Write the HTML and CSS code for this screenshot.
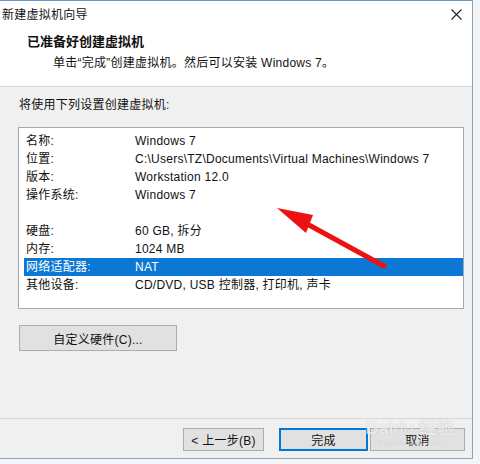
FILE: index.html
```html
<!DOCTYPE html>
<html lang="zh-CN">
<head>
    <meta charset="UTF-8">
    <title>新建虚拟机向导</title>
    <link rel="stylesheet" href="styles.css">
</head>
<body>
    <div class="window">
        <div class="titlebar">
            <span class="title">新建虚拟机向导</span>
            <svg class="close" width="11" height="11" viewBox="0 0 11 11">
                <path d="M0.5 0.5 L10.5 10.5 M10.5 0.5 L0.5 10.5" stroke="#222" stroke-width="1.1" fill="none"/>
            </svg>
        </div>

        <div class="header">
            <h1>已准备好创建虚拟机</h1>
            <p>单击“完成”创建虚拟机。然后可以安装 Windows 7。</p>
        </div>

        <div class="content">
            <p class="intro">将使用下列设置创建虚拟机:</p>
            <div class="listbox">
                <div class="row"><span class="key">名称:</span><span>Windows 7</span></div>
                <div class="row"><span class="key">位置:</span><span>C:\Users\TZ\Documents\Virtual Machines\Windows 7</span></div>
                <div class="row"><span class="key">版本:</span><span>Workstation 12.0</span></div>
                <div class="row"><span class="key">操作系统:</span><span>Windows 7</span></div>
                <div class="row"></div>
                <div class="row"><span class="key">硬盘:</span><span>60 GB, 拆分</span></div>
                <div class="row"><span class="key">内存:</span><span>1024 MB</span></div>
                <div class="row selected"><span class="key">网络适配器:</span><span>NAT</span></div>
                <div class="row"><span class="key">其他设备:</span><span>CD/DVD, USB 控制器, 打印机, 声卡</span></div>
            </div>
            <button class="btn btn-custom">自定义硬件(C)...</button>
        </div>

        <div class="footer">
            <button class="btn btn-back">&lt; 上一步(B)</button>
            <button class="btn btn-finish">完成</button>
            <button class="btn btn-cancel">取消</button>
        </div>
    </div>

    <!-- annotation arrow -->
    <svg class="arrow" width="480" height="464" viewBox="0 0 480 464">
        <line x1="384" y1="266" x2="298" y2="219" stroke="#ec1212" stroke-width="5" stroke-linecap="round"/>
        <polygon points="277,208 313,215 306,233" fill="#ec1212"/>
    </svg>

    <div class="watermark">
        <span class="wm-big">Bai<span class="wm-du">du</span> 经验</span>
        <span class="wm-small">jingyan.baidu.com</span>
    </div>
</body>
</html>
```

FILE: styles.css
```css
body {
    margin: 0;
    width: 480px;
    height: 464px;
    background: #f3f4f6;
    font-family: "Liberation Sans", "Noto Sans CJK SC", sans-serif;
    font-size: 12px;
    letter-spacing: 0.25px;
    color: #111;
    position: relative;
    overflow: hidden;
}

.window {
    width: 473px;
    height: 459px;
    box-sizing: border-box;
    background: #fff;
    border-top: 1px solid #6f97c6;
    border-right: 1px solid #8ea3ba;
    border-bottom: 1px solid #8ea3ba;
    display: flex;
    flex-direction: column;
}

.titlebar {
    height: 28px;
    display: flex;
    align-items: center;
    justify-content: space-between;
    padding: 0 10px 0 2px;
}

.title {
    font-size: 12px;
    line-height: 18px;
}

.close {
    margin-top: -2px;
}

.header {
    height: 58px;
    box-sizing: border-box;
    border-bottom: 1px solid #d6d6d6;
    padding: 4px 0 0 27px;
}

.header h1 {
    margin: 0;
    font-size: 13px;
    font-weight: 700;
    line-height: 18px;
    letter-spacing: 0;
}

.header p {
    margin: 3px 0 0 26px;
    line-height: 18px;
}

.content {
    flex: 1;
    background: #f0f0f0;
    padding: 9px 0 0 18px;
}

.intro {
    margin: 0 0 13px 1px;
    line-height: 18px;
}

.listbox {
    width: 446px;
    height: 182px;
    box-sizing: border-box;
    background: #fff;
    border: 1px solid #a5a8ad;
    padding: 4px 0 0 5px;
}

.row {
    height: 18px;
    line-height: 18px;
    display: flex;
    padding-left: 2px;
}

.key {
    width: 109px;
    flex-shrink: 0;
}

.selected {
    background: #0a78d4;
    color: #fff;
}

.btn {
    font-family: "Liberation Sans", "Noto Sans CJK SC", sans-serif;
    font-size: 12px;
    letter-spacing: 0.25px;
    color: #111;
    background: #e1e1e1;
    border: 1px solid #adadad;
    padding: 0;
    box-sizing: border-box;
}

.btn-custom {
    display: block;
    margin: 16px 0 0 1px;
    width: 158px;
    height: 26px;
}

.footer {
    height: 40px;
    box-sizing: border-box;
    border-top: 1px solid #d8d8d8;
    background: #f0f0f0;
    display: flex;
    padding: 9px 0 0 183px;
}

.footer .btn {
    height: 23px;
}

.btn-back {
    width: 81px;
    margin-right: 15px;
}

.btn-finish {
    width: 89px;
    border-color: #0078d7;
    box-shadow: inset 0 0 0 1px #0078d7;
    margin-right: 2px;
}

.btn-cancel {
    width: 95px;
}

.arrow {
    position: absolute;
    left: 0;
    top: 0;
    pointer-events: none;
}

.watermark {
    position: absolute;
    left: 358px;
    top: 418px;
    width: 104px;
    display: flex;
    flex-direction: column;
    align-items: center;
    white-space: nowrap;
    color: rgba(255, 255, 255, 0.7);
    text-shadow: 0 0 1px rgba(140, 140, 140, 0.5);
    pointer-events: none;
}

.wm-big {
    font-family: "Liberation Sans", "Noto Sans CJK SC", sans-serif;
    font-size: 18px;
    font-weight: 700;
    line-height: 20px;
    letter-spacing: 0;
}

.wm-du {
    font-weight: 400;
}

.wm-small {
    font-size: 8px;
    line-height: 9px;
    letter-spacing: 0;
    color: rgba(215, 215, 215, 0.8);
    text-shadow: none;
}
```
